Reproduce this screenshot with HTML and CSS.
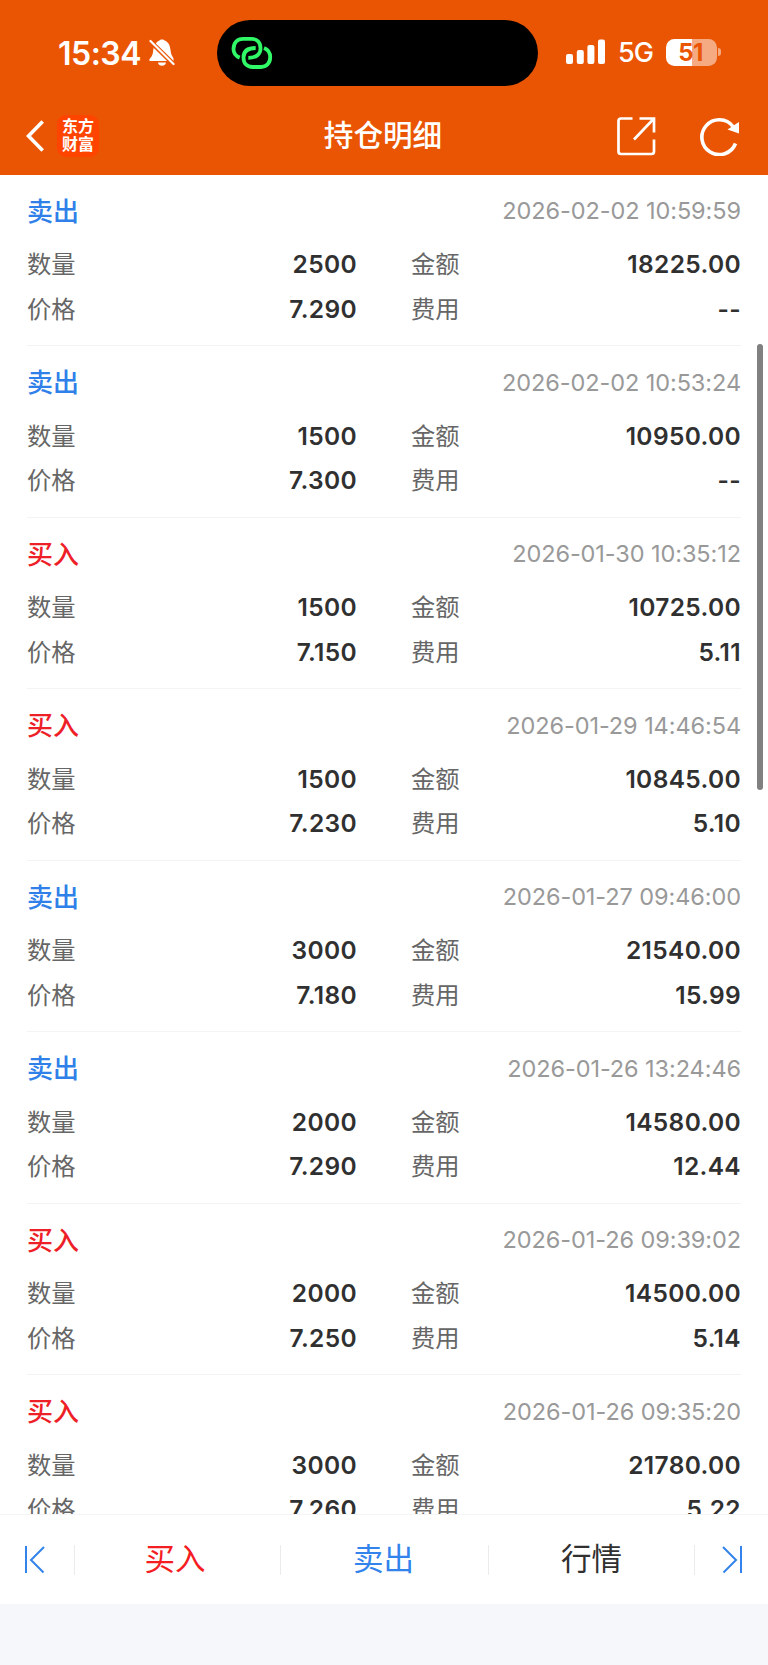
FILE: index.html
```html
<!DOCTYPE html>
<html lang="zh-CN">
<head>
<meta charset="utf-8">
<title>持仓明细</title>
<link rel="stylesheet" href="styles.css">
</head>
<body>
<div class="app">
  <header class="header">
    <div class="status">
      <div class="status-left">
        <span class="clock">15:34</span>
        <svg class="bell" width="26" height="28" viewBox="0 0 26 28">
          <path fill="#fff" d="M5 7.5C6.500 4 8.500 2 10.500 1.500C11 .300 15 .300 15.500 1.500C19.500 2.800 21 6.500 21.500 11C21.800 15 23 16.500 24.500 19.500L24.500 22H1.300C0 22 0 20.500 1 19.500C3.200 17 4 15 4.200 11ZM9 23.500H17C16.500 27.800 9.500 27.800 9 23.500Z"/>
          <path stroke="#ea5504" stroke-width="4.600" d="M0 1L25 25.500"/>
          <path stroke="#fff" stroke-width="2.200" stroke-linecap="round" d="M1.500 2L24.500 25"/>
        </svg>
      </div>
      <div class="island">
        <svg width="42" height="34" viewBox="0 0 42 34" fill="none" stroke="#30f866" stroke-width="3.800">
          <path d="M8.700 21.600C4.500 20 2.500 17 2.500 13C2.500 6.500 6.500 2.800 12 2.800H20.500C26 2.800 29.500 6.500 29.500 12.200C29.500 18 25.500 21.800 17.300 21.800"/>
          <path d="M24.700 12C16.500 12 12.500 15.500 12.500 21.500C12.500 27.500 16 31 21.500 31H30C35.500 31 39.200 27 39.200 21.300C39.200 17 37 13.500 33 12"/>
        </svg>
      </div>
      <div class="status-right">
        <svg class="signal" width="40" height="26" viewBox="0 0 40 26" fill="#fff">
          <rect x="0" y="15" width="7" height="10" rx="2"/><rect x="10.800" y="11" width="7" height="14" rx="2"/><rect x="21.400" y="6" width="7" height="19" rx="2"/><rect x="32" y="0.500" width="7" height="24.500" rx="2"/>
        </svg>
        <span class="network">5G</span>
        <div class="battery"><span>51</span></div>
        <i class="battery-cap"></i>
      </div>
    </div>
    <nav class="nav">
      <div class="nav-left">
        <svg width="18" height="32" viewBox="0 0 18 32" fill="none" stroke="#fff" stroke-width="3.600"><path d="M16.700 1.500L2.500 16L16.700 30.500"/></svg>
        <div class="logo"><span>东方</span><span>财富</span></div>
      </div>
      <h1 class="title">持仓明细</h1>
      <div class="nav-right">
        <svg width="39" height="39" viewBox="0 0 39 39" fill="none" stroke="#fff" stroke-width="2.700"><path d="M15.500 1.500H4Q1.500 1.500 1.500 4V34.500Q1.500 37 4 37H34.500Q37 37 37 34.500V22.500M22.500 1.500H37V15.500M36.500 2L17 22.500"/></svg>
        <svg width="40" height="39" viewBox="0 0 40 39" fill="none"><path stroke="#fff" stroke-width="3.600" d="M35.500 26.500A17.400 17.400 0 1 1 33 9.500"/><path fill="#fff" d="M39 5V16.500L27.500 12.500Z"/></svg>
      </div>
    </nav>
  </header>
  <main class="list" id="list"></main>
  <footer class="tabs">
    <div class="step"><svg width="20" height="28" viewBox="0 0 20 28" fill="none" stroke="#3283ec" stroke-width="2"><path d="M1 0V27M19 1L6 14L18.500 26.500"/></svg></div>
    <div class="tab red">买入</div>
    <div class="tab blue">卖出</div>
    <div class="tab">行情</div>
    <div class="step last"><svg width="20" height="28" viewBox="0 0 20 28" fill="none" stroke="#3283ec" stroke-width="2"><path d="M19 0V27M1 1L14 14L1.500 26.500"/></svg></div>
  </footer>
  <div class="safe-area"></div>
  <div class="scrollbar"></div>
</div>
<script src="app.js"></script>
</body>
</html>
```
FILE: styles.css
```css
* { box-sizing: border-box; }
body { margin: 0; background: #fff; font-family: Inter, "Noto Sans CJK SC", sans-serif; color: #303030; }
.app { position: relative; width: 768px; height: 1665px; display: flex; flex-direction: column; overflow: hidden; }
.header { flex: none; height: 174.6px; background: #ea5504; color: #fff; }
.status { height: 86px; padding: 20px 46px 0 58px; display: grid; grid-template-columns: 159px 321px 1fr; }
.status-left { display: flex; align-items: center; gap: 8px; height: 65px; }
.clock { width: 83px; padding-top: 1px; font-size: 32px; font-weight: 600; letter-spacing: -0.5px; white-space: nowrap; }
.bell { flex: none; }
.island { height: 66px; border-radius: 33px; background: #000; display: flex; align-items: center; padding-left: 14px; }
.status-right { display: flex; align-items: center; height: 64px; padding-left: 28px; }
.signal { flex: none; }
.network { width: 35px; margin-left: 12px; padding-top: 2px; font-size: 27px; font-weight: 500; letter-spacing: -1px; line-height: 30px; }
.battery { flex: none; width: 51px; height: 27px; margin-left: 13px; border-radius: 8.5px; background: linear-gradient(90deg, #fff 26px, #f5aa82 26px); color: #ea5504; font-size: 24px; font-weight: 700; line-height: 27px; text-align: center; letter-spacing: -0.5px; padding-right: 2px; }
.battery-cap { flex: none; width: 3px; height: 8px; margin-left: 1px; border-radius: 0 4px 4px 0; background: #f5aa82; }
.nav { height: 88px; display: grid; grid-template-columns: 1fr auto 1fr; align-items: center; padding: 0 28px 0 26px; }
.nav-left { display: flex; align-items: center; gap: 13px; padding-top: 11px; }
.logo { width: 42px; height: 42px; padding-bottom: 1px; border-radius: 9px; background: #ff4400; display: flex; flex-direction: column; align-items: center; justify-content: center; font-size: 16px; line-height: 18px; font-weight: 700; }
.title { margin: 0; padding-top: 9px; font-size: 29.6px; font-weight: 500; line-height: 40px; }
.nav-right { display: flex; justify-content: flex-end; gap: 44px; padding-top: 12px; }
.list { flex: none; height: 1339.9px; overflow: hidden; padding: 0 27px; }
.record { height: 171.5px; padding-top: 15.2px; border-bottom: 1px solid #f4f4f4; }
.record-head { display: flex; justify-content: space-between; align-items: center; height: 42px; margin-bottom: 10.2px; }
.kind { padding-bottom: 3px; font-size: 26px; font-weight: 500; }
.sell { color: #2f80e8; }
.buy { color: #ee2027; }
.time { font-size: 23.5px; color: #999; letter-spacing: -0.08px; }
.fields { display: grid; grid-template-columns: 330px 330px; column-gap: 54px; grid-auto-rows: 44.6px; }
.field { display: flex; justify-content: space-between; align-items: center; }
.label { padding-bottom: 3px; font-size: 24.3px; color: #666; }
.value { font-size: 24.5px; font-weight: 600; color: #303030; letter-spacing: 0.35px; }
.tabs { flex: none; height: 90px; border-top: 1px solid #f5f5f5; background: #fff; display: grid; grid-template-columns: 75px 206px 208px 206px 73px; align-items: center; }
.step, .tab { height: 30px; display: flex; align-items: center; border-right: 1px solid #ebebeb; }
.step { padding-left: 25px; }
.step.last { border: 0; padding-left: 27px; }
.tab { justify-content: center; font-size: 30.5px; padding: 0 0 5px; }
.red { color: #f41d22; padding-right: 5px; }
.blue { color: #3283ec; padding-right: 2px; }
.safe-area { flex: 1; background: #f5f7fa; }
.scrollbar { position: absolute; top: 344px; right: 5.5px; width: 6px; height: 446px; border-radius: 3px; background: #808080; }
```
FILE: app.js
```js
const records = [
  ["sell", "2026-02-02 10:59:59", "2500", "18225.00", "7.290", "--"],
  ["sell", "2026-02-02 10:53:24", "1500", "10950.00", "7.300", "--"],
  ["buy", "2026-01-30 10:35:12", "1500", "10725.00", "7.150", "5.11"],
  ["buy", "2026-01-29 14:46:54", "1500", "10845.00", "7.230", "5.10"],
  ["sell", "2026-01-27 09:46:00", "3000", "21540.00", "7.180", "15.99"],
  ["sell", "2026-01-26 13:24:46", "2000", "14580.00", "7.290", "12.44"],
  ["buy", "2026-01-26 09:39:02", "2000", "14500.00", "7.250", "5.14"],
  ["buy", "2026-01-26 09:35:20", "3000", "21780.00", "7.260", "5.22"]
];
const labels = ["数量", "金额", "价格", "费用"];
document.getElementById("list").innerHTML = records.map(([kind, time, ...values]) => `
  <section class="record">
    <div class="record-head"><span class="kind ${kind}">${kind === "sell" ? "卖出" : "买入"}</span><span class="time">${time}</span></div>
    <div class="fields">${values.map((v, i) => `<div class="field"><span class="label">${labels[i]}</span><span class="value">${v}</span></div>`).join("")}</div>
  </section>`).join("");
```
